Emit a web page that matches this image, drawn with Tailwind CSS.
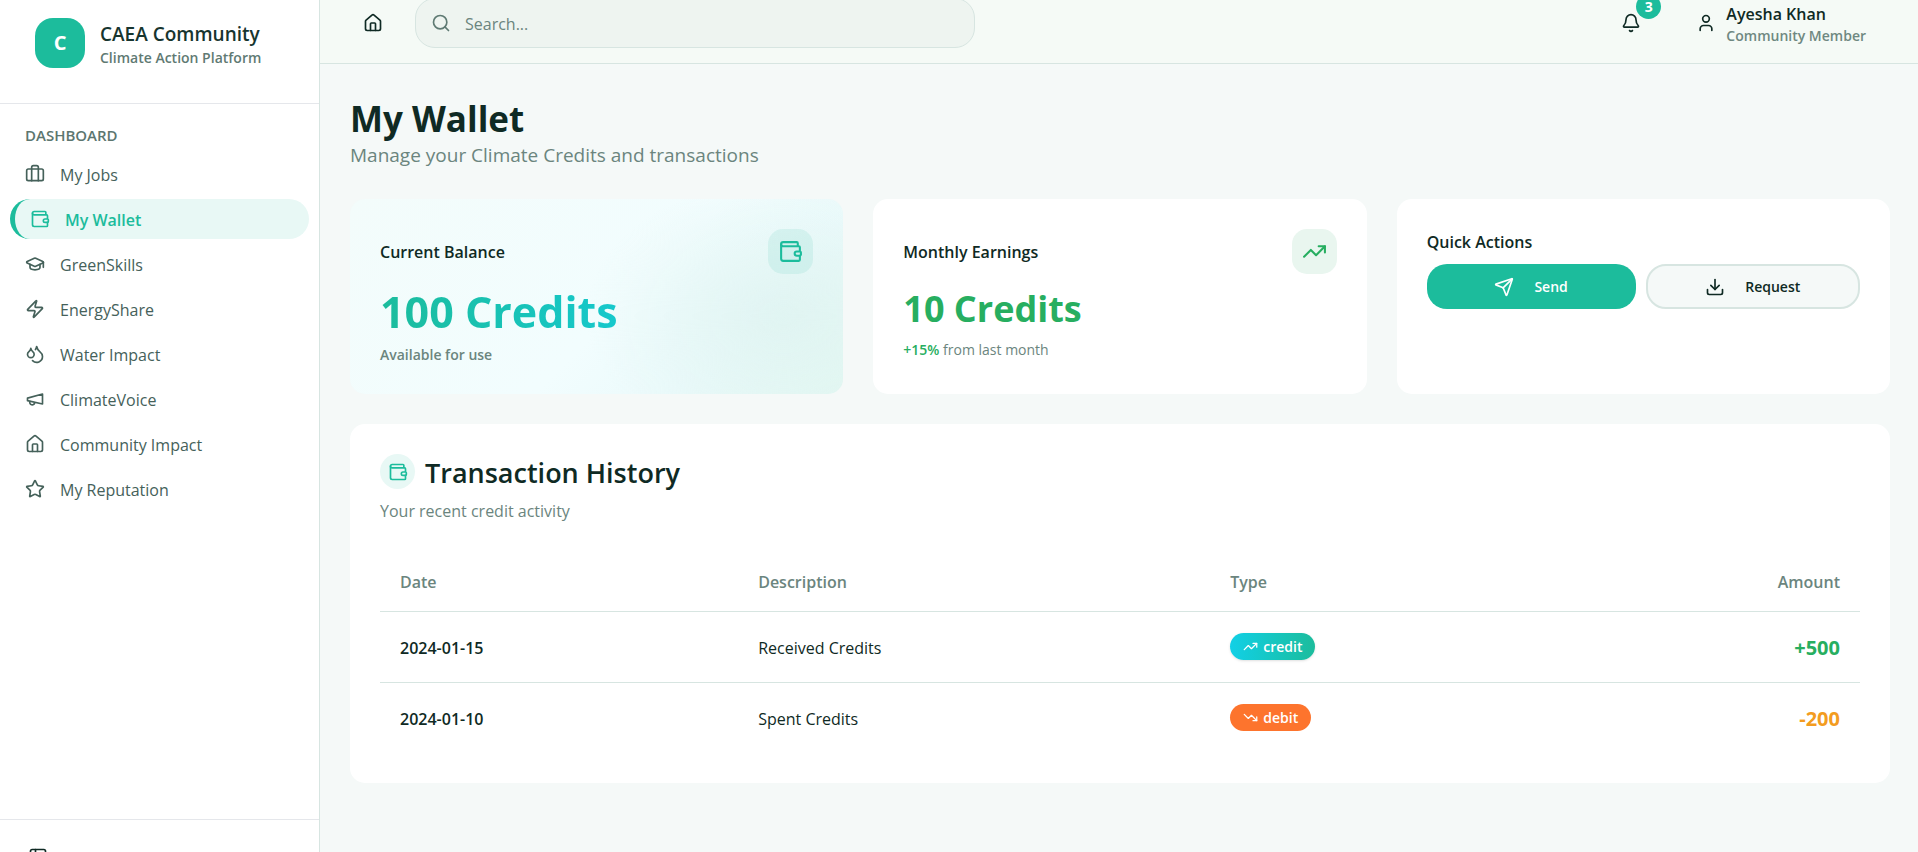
<!DOCTYPE html>
<html lang="en">
<head>
<meta charset="utf-8">
<meta name="viewport" content="width=device-width, initial-scale=1">
<title>My Wallet - CAEA Community</title>
<script src="https://cdn.jsdelivr.net/npm/@tailwindcss/browser@4"></script>
</head>
<body class="flex h-screen overflow-hidden bg-[#f5f9f8] font-['Open_Sans','Noto_Sans',sans-serif] text-[#0f2a24]">

<svg class="hidden" aria-hidden="true">
  <symbol id="briefcase" viewBox="0 0 24 24"><path d="M16 20V4a2 2 0 0 0-2-2h-4a2 2 0 0 0-2 2v16"/><rect width="20" height="14" x="2" y="6" rx="2"/></symbol>
  <symbol id="wallet" viewBox="0 0 24 24"><path d="M19 7V4a1 1 0 0 0-1-1H5a2 2 0 0 0 0 4h15a1 1 0 0 1 1 1v4h-3a2 2 0 0 0 0 4h3a1 1 0 0 0 1-1v-2a1 1 0 0 0-1-1"/><path d="M3 5v14a2 2 0 0 0 2 2h15a1 1 0 0 0 1-1v-4"/></symbol>
  <symbol id="cap" viewBox="0 0 24 24"><path d="M21.42 10.922a1 1 0 0 0-.019-1.838L12.83 5.18a2 2 0 0 0-1.66 0L2.6 9.08a1 1 0 0 0 0 1.832l8.57 3.908a2 2 0 0 0 1.66 0z"/><path d="M22 10v6"/><path d="M6 12.5V16a6 3 0 0 0 12 0v-3.5"/></symbol>
  <symbol id="zap" viewBox="0 0 24 24"><path d="M4 14a1 1 0 0 1-.78-1.63l9.9-10.2a.5.5 0 0 1 .86.46l-1.92 6.02A1 1 0 0 0 13 10h7a1 1 0 0 1 .78 1.63l-9.9 10.2a.5.5 0 0 1-.86-.46l1.92-6.02A1 1 0 0 0 11 14z"/></symbol>
  <symbol id="droplets" viewBox="0 0 24 24"><path d="M7 16.3c2.2 0 4-1.83 4-4.05 0-1.16-.57-2.26-1.71-3.19S7.29 6.75 7 5.3c-.29 1.45-1.14 2.84-2.29 3.76S3 11.1 3 12.25c0 2.22 1.8 4.05 4 4.05z"/><path d="M12.56 6.6A10.97 10.97 0 0 0 14 3.02c.5 2.5 2 4.9 4 6.5s3 3.5 3 5.5a6.98 6.98 0 0 1-11.91 4.97"/></symbol>
  <symbol id="megaphone" viewBox="0 0 24 24"><path d="m3 11 18-5v12L3 14v-3z"/><path d="M11.6 16.8a3 3 0 1 1-5.8-1.6"/></symbol>
  <symbol id="house" viewBox="0 0 24 24"><path d="M15 21v-8a1 1 0 0 0-1-1h-4a1 1 0 0 0-1 1v8"/><path d="M3 10a2 2 0 0 1 .709-1.528l7-5.999a2 2 0 0 1 2.582 0l7 5.999A2 2 0 0 1 21 10v9a2 2 0 0 1-2 2H5a2 2 0 0 1-2-2z"/></symbol>
  <symbol id="star" viewBox="0 0 24 24"><path d="M11.525 2.295a.53.53 0 0 1 .95 0l2.31 4.679a2.123 2.123 0 0 0 1.595 1.16l5.166.756a.53.53 0 0 1 .294.904l-3.736 3.638a2.123 2.123 0 0 0-.611 1.878l.882 5.14a.53.53 0 0 1-.771.56l-4.618-2.428a2.122 2.122 0 0 0-1.973 0L6.396 21.01a.53.53 0 0 1-.77-.56l.881-5.139a2.122 2.122 0 0 0-.611-1.879L2.16 9.795a.53.53 0 0 1 .294-.906l5.165-.755a2.122 2.122 0 0 0 1.597-1.16z"/></symbol>
  <symbol id="panel" viewBox="0 0 24 24"><rect width="18" height="18" x="3" y="3" rx="2"/><path d="M9 3v18"/></symbol>
  <symbol id="search-icon" viewBox="0 0 24 24"><circle cx="11" cy="11" r="8"/><path d="m21 21-4.3-4.3"/></symbol>
  <symbol id="bell" viewBox="0 0 24 24"><path d="M10.268 21a2 2 0 0 0 3.464 0"/><path d="M3.262 15.326A1 1 0 0 0 4 17h16a1 1 0 0 0 .74-1.673C19.41 13.956 18 12.499 18 8A6 6 0 0 0 6 8c0 4.499-1.411 5.956-2.738 7.326"/></symbol>
  <symbol id="user" viewBox="0 0 24 24"><path d="M19 21v-2a4 4 0 0 0-4-4H9a4 4 0 0 0-4 4v2"/><circle cx="12" cy="7" r="4"/></symbol>
  <symbol id="trend-up" viewBox="0 0 24 24"><path d="M22 7l-8.5 8.5-5-5L2 17"/><path d="M16 7h6v6"/></symbol>
  <symbol id="trend-down" viewBox="0 0 24 24"><path d="M22 17l-8.5-8.5-5 5L2 7"/><path d="M16 17h6v-6"/></symbol>
  <symbol id="send" viewBox="0 0 24 24"><path d="M14.536 21.686a.5.5 0 0 0 .937-.024l6.5-19a.496.496 0 0 0-.635-.635l-19 6.5a.5.5 0 0 0-.024.937l7.93 3.18a2 2 0 0 1 1.112 1.11z"/><path d="m21.854 2.147-10.94 10.939"/></symbol>
  <symbol id="download" viewBox="0 0 24 24"><path d="M21 15v4a2 2 0 0 1-2 2H5a2 2 0 0 1-2-2v-4"/><path d="m7 10 5 5 5-5"/><path d="M12 15V3"/></symbol>
</svg>

<aside class="flex w-80 shrink-0 flex-col border-r border-[#d7e5e1] bg-white">
  <div class="flex h-[104px] shrink-0 items-start gap-[15px] border-b border-[#e5e7eb] pt-[18px] pl-[35px]">
    <div class="flex size-[50px] items-center justify-center rounded-[18px] bg-[#1cbc9c] text-xl font-bold text-white">C</div>
    <div class="pt-[3px]">
      <p class="text-[19px] leading-[26px] font-semibold text-[#17352f]">CAEA Community</p>
      <p class="text-sm leading-[22px] font-semibold text-[#5f7a73]">Climate Action Platform</p>
    </div>
  </div>
  <nav class="flex-1 px-[10px]" aria-label="Dashboard">
    <h2 class="px-[15px] pt-[21px] pb-[9px] text-[15px] leading-5 font-semibold text-[#5c766f]">DASHBOARD</h2>
    <ul class="flex flex-col gap-[5px] text-base text-[#45615a]">
      <li><a href="#" class="flex h-10 items-center gap-[15px] rounded-full px-[15px]"><svg class="size-5 fill-none stroke-current stroke-2 [stroke-linecap:round] [stroke-linejoin:round]"><use href="#briefcase"/></svg><span class="pt-[2px]">My Jobs</span></a></li>
      <li><a href="#" aria-current="page" class="flex h-10 items-center gap-[15px] rounded-full border-l-5 border-[#1cbc9c] bg-[#e8f8f5] px-[15px] font-semibold text-[#1cbc9c]"><svg class="size-5 fill-none stroke-current stroke-2 [stroke-linecap:round] [stroke-linejoin:round]"><use href="#wallet"/></svg><span class="pt-[2px]">My Wallet</span></a></li>
      <li><a href="#" class="flex h-10 items-center gap-[15px] rounded-full px-[15px]"><svg class="size-5 fill-none stroke-current stroke-2 [stroke-linecap:round] [stroke-linejoin:round]"><use href="#cap"/></svg><span class="pt-[2px]">GreenSkills</span></a></li>
      <li><a href="#" class="flex h-10 items-center gap-[15px] rounded-full px-[15px]"><svg class="size-5 fill-none stroke-current stroke-2 [stroke-linecap:round] [stroke-linejoin:round]"><use href="#zap"/></svg><span class="pt-[2px]">EnergyShare</span></a></li>
      <li><a href="#" class="flex h-10 items-center gap-[15px] rounded-full px-[15px]"><svg class="size-5 fill-none stroke-current stroke-2 [stroke-linecap:round] [stroke-linejoin:round]"><use href="#droplets"/></svg><span class="pt-[2px]">Water Impact</span></a></li>
      <li><a href="#" class="flex h-10 items-center gap-[15px] rounded-full px-[15px]"><svg class="size-5 fill-none stroke-current stroke-2 [stroke-linecap:round] [stroke-linejoin:round]"><use href="#megaphone"/></svg><span class="pt-[2px]">ClimateVoice</span></a></li>
      <li><a href="#" class="flex h-10 items-center gap-[15px] rounded-full px-[15px]"><svg class="size-5 fill-none stroke-current stroke-2 [stroke-linecap:round] [stroke-linejoin:round]"><use href="#house"/></svg><span class="pt-[2px]">Community Impact</span></a></li>
      <li><a href="#" class="flex h-10 items-center gap-[15px] rounded-full px-[15px]"><svg class="size-5 fill-none stroke-current stroke-2 [stroke-linecap:round] [stroke-linejoin:round]"><use href="#star"/></svg><span class="pt-[2px]">My Reputation</span></a></li>
    </ul>
  </nav>
  <div class="h-[33px] shrink-0 overflow-hidden border-t border-[#e5e7eb] pt-[27px] pl-7">
    <button type="button" aria-label="Toggle sidebar" class="block"><svg class="size-5 fill-none stroke-current stroke-2 [stroke-linecap:round] [stroke-linejoin:round]"><use href="#panel"/></svg></button>
  </div>
</aside>

<div class="flex min-w-0 flex-1 flex-col">
  <header class="-mt-[18px] flex h-[82px] shrink-0 items-center border-b border-[#d7e5e1] bg-[#f5faf6] pr-[52px] pl-[43px]">
    <a href="#" aria-label="Home"><svg class="size-5 fill-none stroke-current stroke-2 [stroke-linecap:round] [stroke-linejoin:round]"><use href="#house"/></svg></a>
    <form role="search" class="ml-8 flex h-[50px] w-full max-w-[560px] items-center gap-[14px] rounded-[20px] border border-[#d7e5e1] bg-[#eef4f0] px-[15px]">
      <svg class="size-5 shrink-0 fill-none stroke-[#5f7a73] stroke-2 [stroke-linecap:round] [stroke-linejoin:round]"><use href="#search-icon"/></svg>
      <input type="search" aria-label="Search" placeholder="Search..." class="min-w-0 flex-1 bg-transparent pt-[2px] text-base outline-none placeholder:text-[#6b857e]">
    </form>
    <button type="button" aria-label="Notifications, 3 new" class="relative ml-auto flex size-[50px] shrink-0 items-center justify-center">
      <svg class="size-5 fill-none stroke-current stroke-2 [stroke-linecap:round] [stroke-linejoin:round]"><use href="#bell"/></svg>
      <span class="absolute -top-1 -right-[5px] flex size-[25px] items-center justify-center rounded-full bg-[#1cbc9c] pt-px text-sm leading-3 font-bold text-white">3</span>
    </button>
    <button type="button" class="ml-10 flex shrink-0 items-center gap-[10px] text-left">
      <svg class="size-5 fill-none stroke-current stroke-2 [stroke-linecap:round] [stroke-linejoin:round]"><use href="#user"/></svg>
      <span class="flex flex-col pt-[5px]">
        <span class="text-base leading-[22px] font-semibold">Ayesha Khan</span>
        <span class="text-sm leading-[22px] font-semibold text-[#6f8881]">Community Member</span>
      </span>
    </button>
  </header>

  <main class="flex flex-1 flex-col gap-[30px] pt-[33px] pr-7 pl-[30px]">
    <div>
      <h1 class="text-[35px] leading-[44px] font-bold">My Wallet</h1>
      <p class="text-[19px] leading-7 text-[#6b857e]">Manage your Climate Credits and transactions</p>
    </div>

    <div class="grid grid-cols-3 gap-[30px]">
      <section class="h-[195px] rounded-[15px] bg-[radial-gradient(ellipse_40%_70%_at_88%_60%,#def3f0cc_0%,#def3f000_100%),linear-gradient(135deg,#f3fcfb_0%,#f2fdfe_55%,#ebfafb_75%,#e3f8f2_100%)] p-[30px]">
        <div class="flex h-[45px] items-center justify-between">
          <h2 class="pt-px text-base font-semibold">Current Balance</h2>
          <span class="flex size-[45px] items-center justify-center rounded-[15px] bg-[#1cbc9c]/10 text-[#1cbc9c]"><svg class="size-[25px] fill-none stroke-current stroke-2 [stroke-linecap:round] [stroke-linejoin:round]"><use href="#wallet"/></svg></span>
        </div>
        <p class="mt-[10px] w-fit bg-linear-to-r from-[#1cbc9c] to-[#16c8cc] bg-clip-text text-[43px] leading-[56px] font-bold text-transparent">100 Credits</p>
        <p class="mt-[5px] text-sm leading-5 font-semibold text-[#6b857e]">Available for use</p>
      </section>

      <section class="h-[195px] rounded-[15px] bg-white p-[30px]">
        <div class="flex h-[45px] items-center justify-between">
          <h2 class="pt-px text-base font-semibold">Monthly Earnings</h2>
          <span class="flex size-[45px] items-center justify-center rounded-[15px] bg-[#e9f6ef] text-[#27ae60]"><svg class="size-[25px] fill-none stroke-current stroke-2 [stroke-linecap:round] [stroke-linejoin:round]"><use href="#trend-up"/></svg></span>
        </div>
        <p class="mt-[10px] text-4xl leading-[50px] font-bold text-[#27ae60]">10 Credits</p>
        <p class="mt-[6px] text-sm leading-5 text-[#6b857e]"><span class="font-semibold text-[#27ae60]">+15%</span> from last month</p>
      </section>

      <section class="h-[195px] rounded-[15px] bg-white p-[30px]">
        <h2 class="mb-2 text-base leading-[27px] font-semibold">Quick Actions</h2>
        <div class="flex gap-[10px] text-sm font-semibold">
          <button type="button" class="flex h-[45px] flex-auto items-center justify-center gap-5 rounded-[20px] bg-[#1cbc9c] px-5 text-white"><svg class="size-5 fill-none stroke-current stroke-2 [stroke-linecap:round] [stroke-linejoin:round]"><use href="#send"/></svg>Send</button>
          <button type="button" class="flex h-[45px] flex-auto items-center justify-center gap-5 rounded-[20px] border-2 border-[#d7e5e1] bg-[#f5f9f8] px-[10px]"><svg class="size-5 fill-none stroke-current stroke-2 [stroke-linecap:round] [stroke-linejoin:round]"><use href="#download"/></svg>Request</button>
        </div>
      </section>
    </div>

    <section class="rounded-[15px] bg-white p-[30px]">
      <div class="flex items-start gap-[10px]">
        <span class="flex size-[35px] items-center justify-center rounded-full bg-[#e8f8f5] text-[#1cbc9c]"><svg class="size-5 fill-none stroke-current stroke-2 [stroke-linecap:round] [stroke-linejoin:round]"><use href="#wallet"/></svg></span>
        <h2 class="text-[27px] leading-[38px] font-semibold">Transaction History</h2>
      </div>
      <p class="mt-[7px] text-base leading-6 text-[#6b857e]">Your recent credit activity</p>
      <table class="mt-7 w-full table-fixed text-left text-base">
        <thead>
          <tr class="h-[60px] border-b border-[#d7e5e1] text-[#6b857e]">
            <th scope="col" class="w-[24.2%] px-5 pt-[2px] font-semibold">Date</th>
            <th scope="col" class="w-[31.9%] px-5 pt-[2px] font-semibold">Description</th>
            <th scope="col" class="px-5 pt-[2px] font-semibold">Type</th>
            <th scope="col" class="px-5 pt-[2px] text-right font-semibold">Amount</th>
          </tr>
        </thead>
        <tbody>
          <tr class="h-[71px] border-b border-[#d7e5e1]">
            <td class="px-5 pt-[2px] font-semibold">2024-01-15</td>
            <td class="px-5 pt-[2px]">Received Credits</td>
            <td class="px-5"><span class="flex h-[27px] w-fit items-center gap-[5px] rounded-full bg-linear-to-r from-[#12d0e6] to-[#1cbc9c] px-[13px] text-sm font-semibold text-white shadow-sm"><svg class="size-[15px] fill-none stroke-current stroke-2 [stroke-linecap:round] [stroke-linejoin:round]"><use href="#trend-up"/></svg>credit</span></td>
            <td class="px-5 pt-[2px] text-right text-xl font-bold text-[#27ae60]">+500</td>
          </tr>
          <tr class="h-[71px]">
            <td class="px-5 pt-[2px] font-semibold">2024-01-10</td>
            <td class="px-5 pt-[2px]">Spent Credits</td>
            <td class="px-5"><span class="flex h-[27px] w-fit items-center gap-[5px] rounded-full bg-[#fd742d] px-[13px] text-sm font-semibold text-white"><svg class="size-[15px] fill-none stroke-current stroke-2 [stroke-linecap:round] [stroke-linejoin:round]"><use href="#trend-down"/></svg>debit</span></td>
            <td class="px-5 pt-[2px] text-right text-xl font-bold text-[#f39c20]">-200</td>
          </tr>
        </tbody>
      </table>
    </section>
  </main>
</div>
</body>
</html>
